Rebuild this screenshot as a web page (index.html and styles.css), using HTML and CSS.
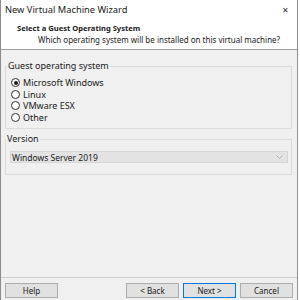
FILE: index.html
```html
<!DOCTYPE html>
<html lang="en">
	<head>
		<meta charset="UTF-8">
		<title>New Virtual Machine Wizard</title>
		<link rel="stylesheet" href="styles.css">
	</head>
	<body>
		<div class="window">
			<div class="titlebar">
				<span>New Virtual Machine Wizard</span>
				<span class="close">&#x2715;</span>
			</div>
			<div class="header">
				<div class="header-title">Select a Guest Operating System</div>
				<div class="header-sub">Which operating system will be installed on this virtual machine?</div>
			</div>

			<div class="content">
				<fieldset class="group guest">
					<legend>Guest operating system</legend>
					<label class="radio"><span class="dot checked"></span>Microsoft Windows</label>
					<label class="radio"><span class="dot"></span>Linux</label>
					<label class="radio"><span class="dot"></span>VMware ESX</label>
					<label class="radio"><span class="dot"></span>Other</label>
				</fieldset>

				<fieldset class="group version">
					<legend>Version</legend>
					<div class="select">
						<span>Windows Server 2019</span>
						<svg class="chevron" width="7" height="4" viewBox="0 0 7 4">
							<path d="M0.5 0.5 L3.5 3.5 L6.5 0.5" fill="none" stroke="#b0b0b0" stroke-width="1"/>
						</svg>
					</div>
				</fieldset>
			</div>

			<div class="footer">
				<button type="button">Help</button>
				<div class="spacer"></div>
				<button type="button">&lt; Back</button>
				<button type="button" class="primary">Next &gt;</button>
				<button type="button">Cancel</button>
			</div>
		</div>
	</body>
</html>
```

FILE: styles.css
```css
body {
    margin: 0;
    background-color: #ffffff;
    font-family: "Noto Sans", "Open Sans", sans-serif;
    font-size: 9px;
    color: #1a1a1a;
}

.window {
    width: 296px;
    height: 300px;
    border-left: 1px solid #8c8c8c;
    border-right: 1px solid #8c8c8c;
    background-color: #f0f0f0;
    display: flex;
    flex-direction: column;
    overflow: hidden;
}

.titlebar {
    height: 18px;
    background-color: #ffffff;
    display: flex;
    align-items: center;
    justify-content: space-between;
    padding: 0 8px 0 4px;
    font-size: 9.3px;
}

.close {
    font-size: 8px;
    color: #333333;
}

.header {
    height: 32px;
    background-color: #ffffff;
    border-bottom: 1px solid #a0a0a0;
    padding-left: 16px;
    box-sizing: border-box;
    padding-top: 5px;
}

.header-title {
    font-weight: bold;
    font-size: 7.6px;
    line-height: 11px;
}

.header-sub {
    padding-left: 21px;
    font-size: 8px;
    line-height: 11px;
}

.content {
    padding: 11px 5px 0 4px;
    flex: 1;
}

.group {
    margin: 0;
    border: 1px solid #dcdcdc;
}

.group legend {
    padding: 0 1px;
    margin-left: -4px;
    line-height: 10px;
}

.guest {
    padding: 6px 6px 5px 5px;
}

.radio {
    display: flex;
    align-items: center;
    gap: 3px;
    height: 11.5px;
}

.dot {
    width: 7px;
    height: 7px;
    border: 1px solid #333333;
    border-radius: 50%;
    background-color: #ffffff;
    display: flex;
    align-items: center;
    justify-content: center;
}

.dot.checked::after {
    content: "";
    width: 4px;
    height: 4px;
    border-radius: 50%;
    background-color: #1a1a1a;
}

.version {
    margin-top: 5px;
    padding: 7px 3px 11px 4px;
}

.select {
    height: 10px;
    background-color: #e3e3e3;
    border: 1px solid #d6d6d6;
    display: flex;
    align-items: center;
    justify-content: space-between;
    padding: 0 4px 0 1px;
    font-size: 8.5px;
}

.footer {
    border-top: 1px solid #cfcfcf;
    height: 23px;
    display: flex;
    align-items: flex-start;
    gap: 4px;
    padding: 5px 4px 0 4px;
    box-sizing: border-box;
}

.spacer {
    flex: 1;
}

button {
    width: 53px;
    height: 15px;
    padding: 0;
    background-color: #e1e1e1;
    border: 1px solid #adadad;
    font-family: inherit;
    font-size: 8px;
    color: #1a1a1a;
}

button.primary {
    border-color: #0078d7;
}
```
